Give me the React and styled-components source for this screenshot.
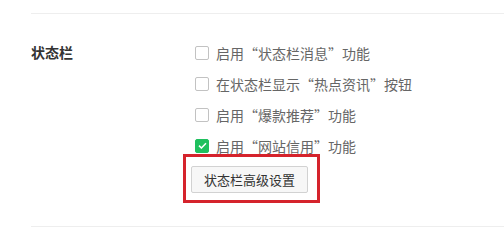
import React, { useState } from 'react';
import styled, { createGlobalStyle } from 'styled-components';

const GlobalStyle = createGlobalStyle`
    body {
        margin: 0;
        background: #fff;
        font-family: "Noto Sans CJK SC", "Liberation Sans", sans-serif;
    }
`

const Page = styled.div`
    padding: 13px 0 0 31px;
`

const Section = styled.div`
    display: flex;
    border-top: 1px solid #eeeeee;
    border-bottom: 1px solid #eeeeee;
    padding: 23px 0 33px;
`

const Label = styled.div`
    width: 160px;
    height: 31px;
    line-height: 31px;
    font-size: 14px;
    font-weight: bold;
    color: #333;
`

const Options = styled.div`
    display: flex;
    flex-direction: column;
    align-items: flex-start;
`

const Row = styled.label`
    display: flex;
    align-items: center;
    height: 31px;
    font-size: 14px;
    color: #666;
    cursor: pointer;
`

const Box = styled.span`
    box-sizing: border-box;
    width: 14px;
    height: 14px;
    margin: 0 7px 0 4px;
    border-radius: 2px;
    border: 1px solid ${p => (p.checked ? '#1fc05e' : '#c2c2c2')};
    background: ${p => (p.checked ? '#1fc05e' : '#fff')};
    display: flex;
    align-items: center;
    justify-content: center;
`

const Highlight = styled.div`
    position: relative;
    margin-top: 5px;
    &::after {
        content: '';
        position: absolute;
        top: -12px;
        left: -8px;
        right: -12px;
        bottom: -10px;
        border: 3px solid #d5232c;
        pointer-events: none;
    }
`

const Button = styled.button`
    display: block;
    height: 27px;
    padding: 0 12px;
    font-family: "Noto Sans CJK SC", "Liberation Sans", sans-serif;
    font-size: 13px;
    color: #333;
    background: #f7f7f7;
    border: 1px solid #d2d2d2;
    border-radius: 2px;
    cursor: pointer;
`

const items = [
    { text: '启用“状态栏消息”功能', checked: false },
    { text: '在状态栏显示“热点资讯”按钮', checked: false },
    { text: '启用“爆款推荐”功能', checked: false },
    { text: '启用“网站信用”功能', checked: true },
]

function App() {
    const [state, setState] = useState(items.map(i => i.checked));

    const toggle = idx => setState(s => s.map((v, i) => (i === idx ? !v : v)));

    return (
        <Page>
            <GlobalStyle />
            <Section>
                <Label>状态栏</Label>
                <Options>
                    {items.map((item, i) => (
                        <Row key={item.text} onClick={() => toggle(i)}>
                            <Box checked={state[i]}>
                                {state[i] && (
                                    <svg width="9" height="7" viewBox="0 0 9 7">
                                        <path d="M1 3.6 L3.4 6 L8 1.2" fill="none" stroke="#fff" strokeWidth="1.5" />
                                    </svg>
                                )}
                            </Box>
                            {item.text}
                        </Row>
                    ))}
                    <Highlight>
                        <Button>状态栏高级设置</Button>
                    </Highlight>
                </Options>
            </Section>
        </Page>
    );
}

export default App;
